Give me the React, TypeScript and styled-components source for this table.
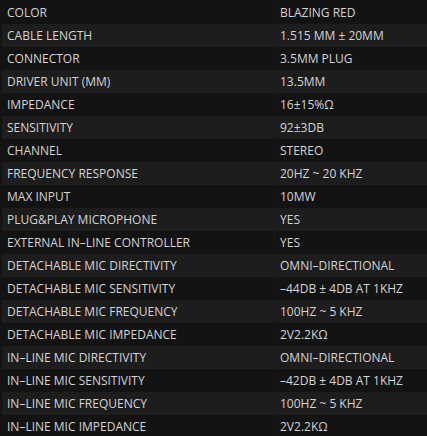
import React from "react";
import styled, { createGlobalStyle } from "styled-components";

const Global = createGlobalStyle`
  html, body {
    margin: 0;
    padding: 0;
    background: #131313;
    overflow: hidden;
  }
`;

const Table = styled.div`
  display: flex;
  flex-direction: column;
  padding-top: 1px;
  padding-left: 2px;
  background: #131313;
  font-family: "Open Sans", "Noto Sans", sans-serif;
  font-size: 12px;
  color: #d4d4d4;
  text-transform: uppercase;
  width: 427px;
  box-sizing: border-box;
`;

const Row = styled.div<{ $alt: boolean }>`
  display: grid;
  grid-template-columns: 273px 1fr;
  height: 23px;
  background: ${(p) => (p.$alt ? "#1d1d1d" : "#131313")};
`;

const Label = styled.div`
  display: flex;
  align-items: center;
  padding-left: 5px;
  border-right: 1px solid #181818;
  white-space: nowrap;
`;

const Value = styled.div`
  display: flex;
  align-items: center;
  padding-left: 5px;
  white-space: nowrap;
`;

const specs: [string, string][] = [
  ["Color", "Blazing Red"],
  ["Cable Length", "1.515 mm ± 20mm"],
  ["Connector", "3.5mm Plug"],
  ["Driver Unit (mm)", "13.5mm"],
  ["Impedance", "16±15%Ω"],
  ["Sensitivity", "92±3dB"],
  ["Channel", "Stereo"],
  ["Frequency Response", "20Hz ~ 20 kHz"],
  ["Max Input", "10mW"],
  ["Plug&Play Microphone", "Yes"],
  ["External In–Line Controller", "Yes"],
  ["Detachable Mic Directivity", "Omni–directional"],
  ["Detachable Mic Sensitivity", "–44dB ± 4dB at 1kHz"],
  ["Detachable Mic Frequency", "100Hz ~ 5 kHz"],
  ["Detachable Mic Impedance", "2V2.2KΩ"],
  ["In–Line Mic Directivity", "Omni–directional"],
  ["In–Line Mic Sensitivity", "–42dB ± 4dB at 1kHz"],
  ["In–Line Mic Frequency", "100Hz ~ 5 kHz"],
  ["In–Line Mic Impedance", "2V2.2KΩ"],
];

export default function App() {
  return (
    <>
      <Global />
      <Table>
        {specs.map(([k, v], i) => (
          <Row key={k} $alt={i % 2 === 1}>
            <Label>{k}</Label>
            <Value>{v}</Value>
          </Row>
        ))}
      </Table>
    </>
  );
}
